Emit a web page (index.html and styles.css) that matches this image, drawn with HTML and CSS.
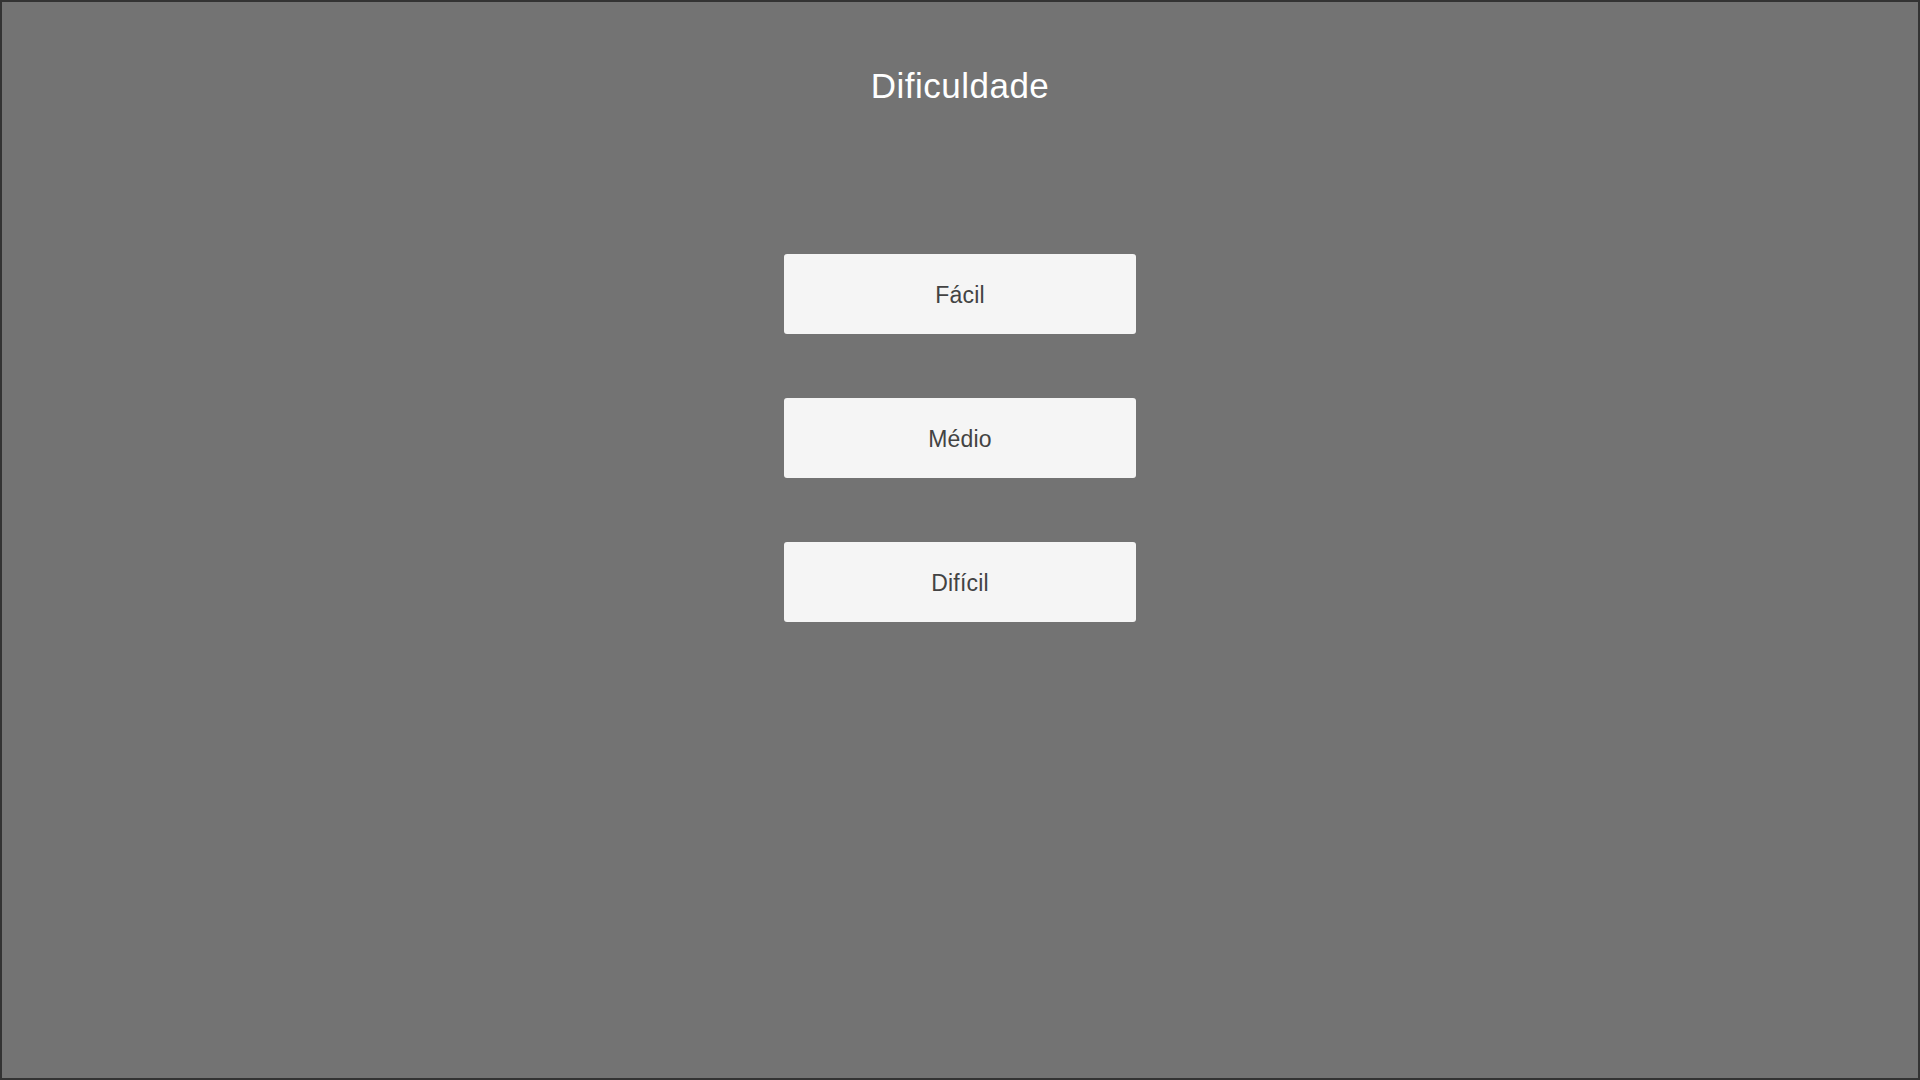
FILE: index.html
```html
<!DOCTYPE html>
<html lang="pt">
<head>
<meta charset="utf-8">
<title>Dificuldade</title>
<link rel="stylesheet" href="styles.css">
</head>
<body>
<main class="screen">
  <h1 class="title">Dificuldade</h1>
  <div class="options">
    <button class="option">Fácil</button>
    <button class="option">Médio</button>
    <button class="option">Difícil</button>
  </div>
</main>
</body>
</html>
```
FILE: styles.css
```css
html, body {
  margin: 0;
  padding: 0;
  background: #2e2e2e;
}
.screen {
  box-sizing: border-box;
  width: 1920px;
  height: 1080px;
  border: 2px solid #333333;
  background: #737373;
  display: flex;
  flex-direction: column;
  align-items: center;
  padding-top: 64px;
  font-family: "Liberation Sans", Arial, sans-serif;
  font-variant-ligatures: none;
}
.title {
  margin: 0;
  font-size: 35px;
  line-height: 40px;
  font-weight: normal;
  letter-spacing: 0.5px;
  color: #ffffff;
}
.options {
  margin-top: 148px;
  display: flex;
  flex-direction: column;
  gap: 64px;
}
.option {
  box-sizing: border-box;
  width: 352px;
  height: 80px;
  border: none;
  border-radius: 3px;
  background: #f5f5f5;
  color: #434343;
  font-family: "Liberation Sans", Arial, sans-serif;
  font-variant-ligatures: none;
  font-size: 23px;
  letter-spacing: 0.2px;
  display: flex;
  align-items: center;
  justify-content: center;
  padding: 2px 0 0 0;
}
```
